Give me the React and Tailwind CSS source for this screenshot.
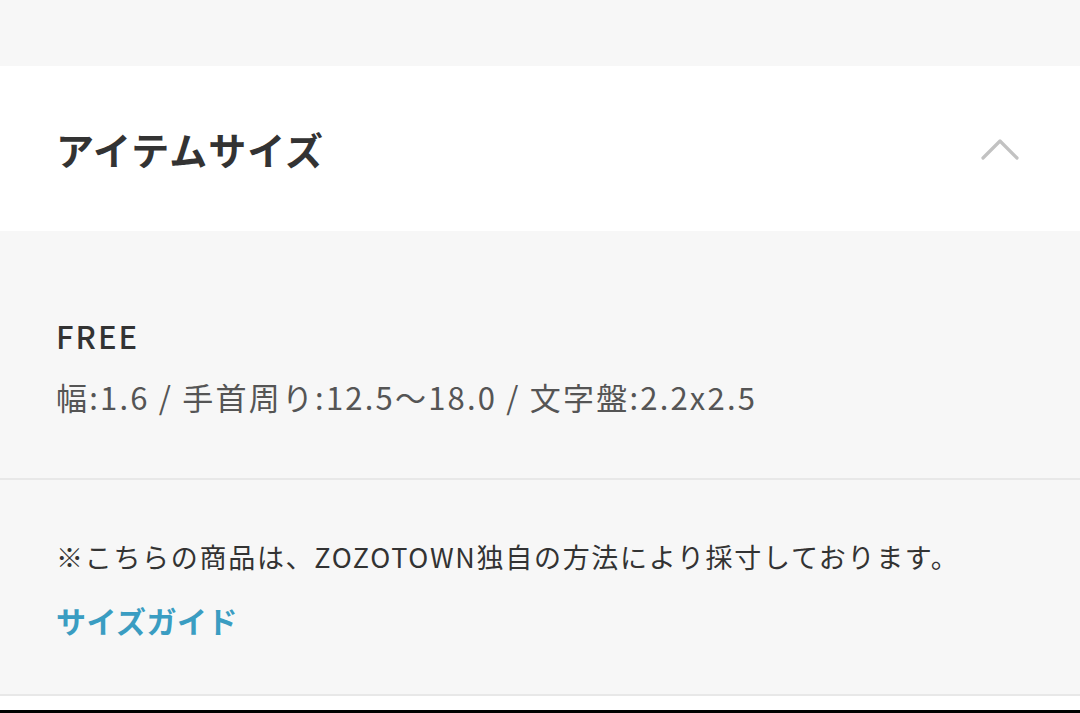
import React from 'react';

const jp = { fontFamily: '"Noto Sans CJK JP", "Noto Sans", sans-serif' };

function Chevron() {
  return (
    <svg width="40" height="26" viewBox="0 0 40 26" fill="none">
      <polyline points="3,22 20,5 37,22" stroke="#c2c2c2" strokeWidth="3.2" strokeLinecap="round" strokeLinejoin="round" />
    </svg>
  );
}

export default function App() {
  return (
    <div className="w-[1080px] h-[713px] bg-[#f7f7f7] flex flex-col overflow-hidden" style={jp}>
      {/* top spacer */}
      <div className="h-[66px] shrink-0" />

      {/* accordion header */}
      <div className="h-[165px] shrink-0 bg-white flex items-center justify-between pl-[56px] pr-[60px]">
        <h2 className="text-[38px] leading-[44px] font-bold text-[#333] tracking-[1px]">アイテムサイズ</h2>
        <Chevron />
      </div>

      {/* size body */}
      <div className="shrink-0 pl-[56px] pt-[85px] pb-[61px]">
        <p className="text-[31px] leading-[40px] font-medium text-[#333] tracking-[2px]">FREE</p>
        <p className="mt-[21px] text-[31px] leading-[40px] text-[#555] tracking-[2.2px]">
          幅:1.6 / 手首周り:12.5～18.0 / 文字盤:2.2x2.5
        </p>
      </div>

      <div className="h-[2px] shrink-0 bg-[#e8e8e8]" />

      {/* note */}
      <div className="shrink-0 pl-[56px] pt-[59px] pb-[56px]">
        <p className="text-[27px] leading-[36px] text-[#333] tracking-[1.7px]">
          ※こちらの商品は、ZOZOTOWN独自の方法により採寸しております。
        </p>
        <a className="block mt-[27px] text-[30px] leading-[36px] font-bold text-[#3a9dc2] tracking-[0.5px]">サイズガイド</a>
      </div>

      <div className="h-[2px] shrink-0 bg-[#e8e8e8]" />
      <div className="h-[14px] shrink-0 bg-white" />
      <div className="flex-1 bg-black" />
    </div>
  );
}
